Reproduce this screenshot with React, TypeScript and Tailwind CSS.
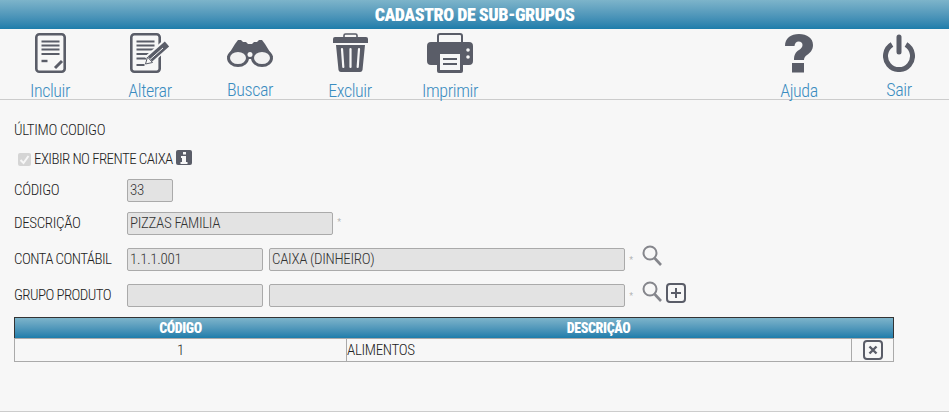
import { ReactNode } from "react";

const gradient = "bg-gradient-to-b from-[#7db4ca] to-[#1c7dab]";
const inputClass =
  "h-[23px] shrink-0 rounded-[2px] border border-[#aaaaaa] bg-[#e3e3e3] px-[2px] text-[15px] leading-[21px] text-[#333333]";

function Doc() {
  return (
    <svg width="31" height="40" viewBox="0 0 31 40">
      <rect x="1.3" y="1.3" width="28.400" height="37.400" rx="3" fill="none" stroke="#5a5d68" strokeWidth="2.600" />
      <path d="M6.500 8.500h18M6.500 12.500h18M6.500 16.500h18M6.500 21h18" stroke="#5a5d68" strokeWidth="2" />
      <path d="M6.500 28h6" stroke="#5a5d68" strokeWidth="2.400" />
      <path d="M20 35l7-7" stroke="#5a5d68" strokeWidth="3" />
    </svg>
  );
}

function DocPencil() {
  return (
    <svg width="40" height="40" viewBox="0 0 40 40">
      <path d="M29.700 21V35.500A3 3 0 0 1 26.700 38.700H4.300A3 3 0 0 1 1.300 35.700V4.300A3 3 0 0 1 4.300 1.300H26.700A3 3 0 0 1 29.700 4.300V13" fill="none" stroke="#5a5d68" strokeWidth="2.600" />
      <path d="M6.500 8.500h18M6.500 12.500h18M6.500 16.500h18M6.500 21h14M6.500 25.500h10M6.500 32h8" stroke="#5a5d68" strokeWidth="2" />
      <path d="M18 27.500L37 10.500" stroke="#f7f7f7" strokeWidth="10" />
      <path d="M20 26L37 11" stroke="#5a5d68" strokeWidth="6.500" />
      <path d="M20 26.500L33 15" stroke="#f7f7f7" strokeWidth="1" />
      <path d="M15.500 31l2-7 5 5.500z" fill="#f7f7f7" stroke="#5a5d68" strokeWidth="1" />
    </svg>
  );
}

function Binoculars() {
  return (
    <svg width="46" height="28" viewBox="0 0 46 28">
      <path d="M0 18L8 5 11 1h3l2 2h3l2 2h4l2-2h3l2-2h3l3 4 8 13z" fill="#5a5d68" />
      <rect x="11" y="10" width="24" height="10" fill="#5a5d68" />
      <ellipse cx="11" cy="19" rx="9.500" ry="7.500" fill="#f1f1f1" stroke="#5a5d68" strokeWidth="3" />
      <ellipse cx="35" cy="19" rx="9.500" ry="7.500" fill="#f1f1f1" stroke="#5a5d68" strokeWidth="3" />
      <circle cx="23" cy="15.500" r="2.500" fill="#f7f7f7" />
    </svg>
  );
}

function Trash() {
  return (
    <svg width="35" height="40" viewBox="0 0 35 40">
      <path d="M11 5V2.500A1.500 1.500 0 0 1 12.500 1h10A1.500 1.500 0 0 1 24 2.500V5" fill="none" stroke="#5a5d68" strokeWidth="1.600" />
      <path d="M2 4h31a2 2 0 0 1 2 2v4H0V6a2 2 0 0 1 2-2z" fill="#5a5d68" />
      <path d="M3 12h29l-2.500 25a2.500 2.500 0 0 1-2.500 2H8a2.500 2.500 0 0 1-2.500-2z" fill="#5a5d68" />
      <path d="M9 16l1.300 18M17.500 16v18M26 16l-1.300 18" stroke="#f7f7f7" strokeWidth="2.200" strokeLinecap="round" />
    </svg>
  );
}

function Printer() {
  return (
    <svg width="46" height="40" viewBox="0 0 46 40">
      <path d="M11 10V3a2 2 0 0 1 2-2h20a2 2 0 0 1 2 2v7" fill="none" stroke="#5a5d68" strokeWidth="2" />
      <path d="M4 9h38a4 4 0 0 1 4 4v15a4 4 0 0 1-4 4h-6v6a2 2 0 0 1-2 2H12a2 2 0 0 1-2-2v-6H4a4 4 0 0 1-4-4V13a4 4 0 0 1 4-4z" fill="#5a5d68" />
      <rect x="13" y="21" width="20" height="16" fill="#f7f7f7" />
      <path d="M16 26h14M16 31h14" stroke="#5a5d68" strokeWidth="2.200" />
      <circle cx="41" cy="17" r="1.800" fill="#f7f7f7" />
      <circle cx="41" cy="24" r="1.800" fill="#f7f7f7" />
    </svg>
  );
}

function Question() {
  return (
    <svg width="30" height="40" viewBox="0 0 30 40">
      <path d="M1 13C1 5 7 1 15 1c8 0 14 4 14 11 0 5-3 8-6 10-2 1.500-3 2.500-3 5H10c0-5 1.500-8 5-10 2-1.200 3.500-3 3.500-5 0-2-1.500-3.500-3.800-3.500-2.500 0-4 1.800-4.200 4.500z" fill="#5a5d68" />
      <rect x="8" y="30" width="12" height="9.500" fill="#5a5d68" />
    </svg>
  );
}

function Power() {
  return (
    <svg width="32" height="38" viewBox="0 0 32 38">
      <path d="M9 10.500a13.500 13.500 0 1 0 14 0" fill="none" stroke="#5a5d68" strokeWidth="5" />
      <path d="M16 3v15" stroke="#5a5d68" strokeWidth="5" strokeLinecap="round" />
    </svg>
  );
}

function Lens() {
  return (
    <svg width="20" height="21" viewBox="0 0 20 21" className="block shrink-0">
      <circle cx="8" cy="8" r="6.500" fill="none" stroke="#85868c" strokeWidth="2" />
      <path d="M12.500 13l6.500 7" stroke="#85868c" strokeWidth="2.600" />
    </svg>
  );
}

function BoxIcon({ kind }: { kind: "plus" | "x" }) {
  return (
    <svg width="20" height="20" viewBox="0 0 20 20" className="block shrink-0">
      <rect x="1" y="1" width="18" height="18" rx="3" fill="none" stroke="#5a5d68" strokeWidth="2" />
      {kind === "plus" ? (
        <path d="M10 5v10M5 10h10" stroke="#5a5d68" strokeWidth="2" />
      ) : (
        <path d="M6.500 6.500l7 7M13.500 6.500l-7 7" stroke="#5a5d68" strokeWidth="2.400" />
      )}
    </svg>
  );
}

function ToolButton({ icon, label, className }: { icon: ReactNode; label: string; className: string }) {
  return (
    <div className={`flex flex-col items-center ${className}`}>
      <div className="mt-[4px] flex h-[40px] items-center justify-center">{icon}</div>
      <span className="mt-[9px] text-[18px] leading-[18px] font-light tracking-[-0.4px] text-[#3a8cc0]">{label}</span>
    </div>
  );
}

function Required() {
  return <span className="block w-[6px] text-center text-[9px] leading-[10px] text-[#999999]">*</span>;
}

export default function App() {
  return (
    <div className="h-[412px] w-[949px] overflow-hidden whitespace-nowrap border-b border-[#cccccc] bg-[#f7f7f7] font-['Roboto',sans-serif] [font-stretch:75%] text-[15px] font-light tracking-[-0.35px] text-[#222222]">
      <div className={`flex h-[29px] items-center justify-center ${gradient}`}>
        <h1 className="text-[18px] font-black tracking-[-0.5px] text-white">CADASTRO DE SUB-GRUPOS</h1>
      </div>

      <div className="flex h-[71px] border-b border-[#cccccc]">
        <ToolButton icon={<Doc />} label="Incluir" className="w-[100px]" />
        <ToolButton icon={<DocPencil />} label="Alterar" className="w-[100px]" />
        <ToolButton icon={<Binoculars />} label="Buscar" className="w-[100px]" />
        <ToolButton icon={<Trash />} label="Excluir" className="w-[100px]" />
        <ToolButton icon={<Printer />} label="Imprimir" className="w-[100px]" />
        <div className="flex-1" />
        <ToolButton icon={<Question />} label="Ajuda" className="w-[100px]" />
        <ToolButton icon={<Power />} label="Sair" className="w-[100px]" />
      </div>

      <div className="px-[14px]">
        <div className="mt-[21px] leading-[18px]">ÚLTIMO CODIGO</div>

        <div className="mt-[11px] flex h-[18px] items-center pl-[4px]">
          <span className="flex h-[13px] w-[13px] items-center justify-center rounded-[2px] bg-[#d5d5d5]">
            <svg width="11" height="11" viewBox="0 0 11 11">
              <path d="M1.500 6l3 3 5-7" fill="none" stroke="#f7f7f7" strokeWidth="2" />
            </svg>
          </span>
          <span className="ml-[3px] tracking-[-0.58px]">EXIBIR NO FRENTE CAIXA</span>
          <span className="mb-[3px] ml-[3px] flex h-[15px] w-[16px] items-center justify-center rounded-[2px] bg-[#5a5d68]">
            <svg width="10" height="12" viewBox="0 0 10 12">
              <path d="M4 0h3v2.500H4zM2 4h5v6h1.500v2h-7v-2H3V6H2z" fill="#f7f7f7" />
            </svg>
          </span>
        </div>

        <div className="mt-[11px] flex items-center">
          <label className="w-[113px]">CÓDIGO</label>
          <div className={`${inputClass} w-[46px]`}>33</div>
        </div>

        <div className="mt-[10px] flex h-[23px] items-center">
          <label className="w-[113px]">DESCRIÇÃO</label>
          <div className={`${inputClass} w-[206px]`}>PIZZAS FAMILIA</div>
          <span className="mb-[3px] ml-[3px]"><Required /></span>
        </div>

        <div className="mt-[13px] flex h-[23px] items-center">
          <label className="w-[113px] tracking-[-0.6px]">CONTA CONTÁBIL</label>
          <div className={`${inputClass} w-[136px]`}>1.1.1.001</div>
          <div className={`${inputClass} ml-[6px] w-[356px]`}>CAIXA (DINHEIRO)</div>
          <span className="ml-[3px]"><Required /></span>
          <span className="-mt-[8px] ml-[8px]"><Lens /></span>
        </div>

        <div className="mt-[13px] flex h-[23px] items-center">
          <label className="w-[113px] tracking-[-0.6px]">GRUPO PRODUTO</label>
          <div className={`${inputClass} w-[136px]`} />
          <div className={`${inputClass} ml-[6px] w-[356px]`} />
          <span className="ml-[3px]"><Required /></span>
          <span className="-mt-[8px] ml-[8px]"><Lens /></span>
          <span className="-mt-[6px] ml-[4px]"><BoxIcon kind="plus" /></span>
        </div>

        <div className="mt-[10px] w-[880px]">
          <div className={`grid h-[21px] grid-cols-[331px_1fr] items-center border-t border-r border-l border-[#333333] text-center text-[14px] font-black tracking-[-0.4px] text-white ${gradient}`}>
            <span>CÓDIGO</span>
            <span className="pr-[42px]">DESCRIÇÃO</span>
          </div>
          <div className="grid h-[24px] grid-cols-[331px_505px_1fr] items-center border border-[#aaaaaa]">
            <span className="text-center">1</span>
            <span className="h-full border-l border-[#aaaaaa] leading-[22px]">ALIMENTOS</span>
            <span className="flex h-full items-center justify-center border-l border-[#aaaaaa]">
              <BoxIcon kind="x" />
            </span>
          </div>
        </div>
      </div>
    </div>
  );
}
